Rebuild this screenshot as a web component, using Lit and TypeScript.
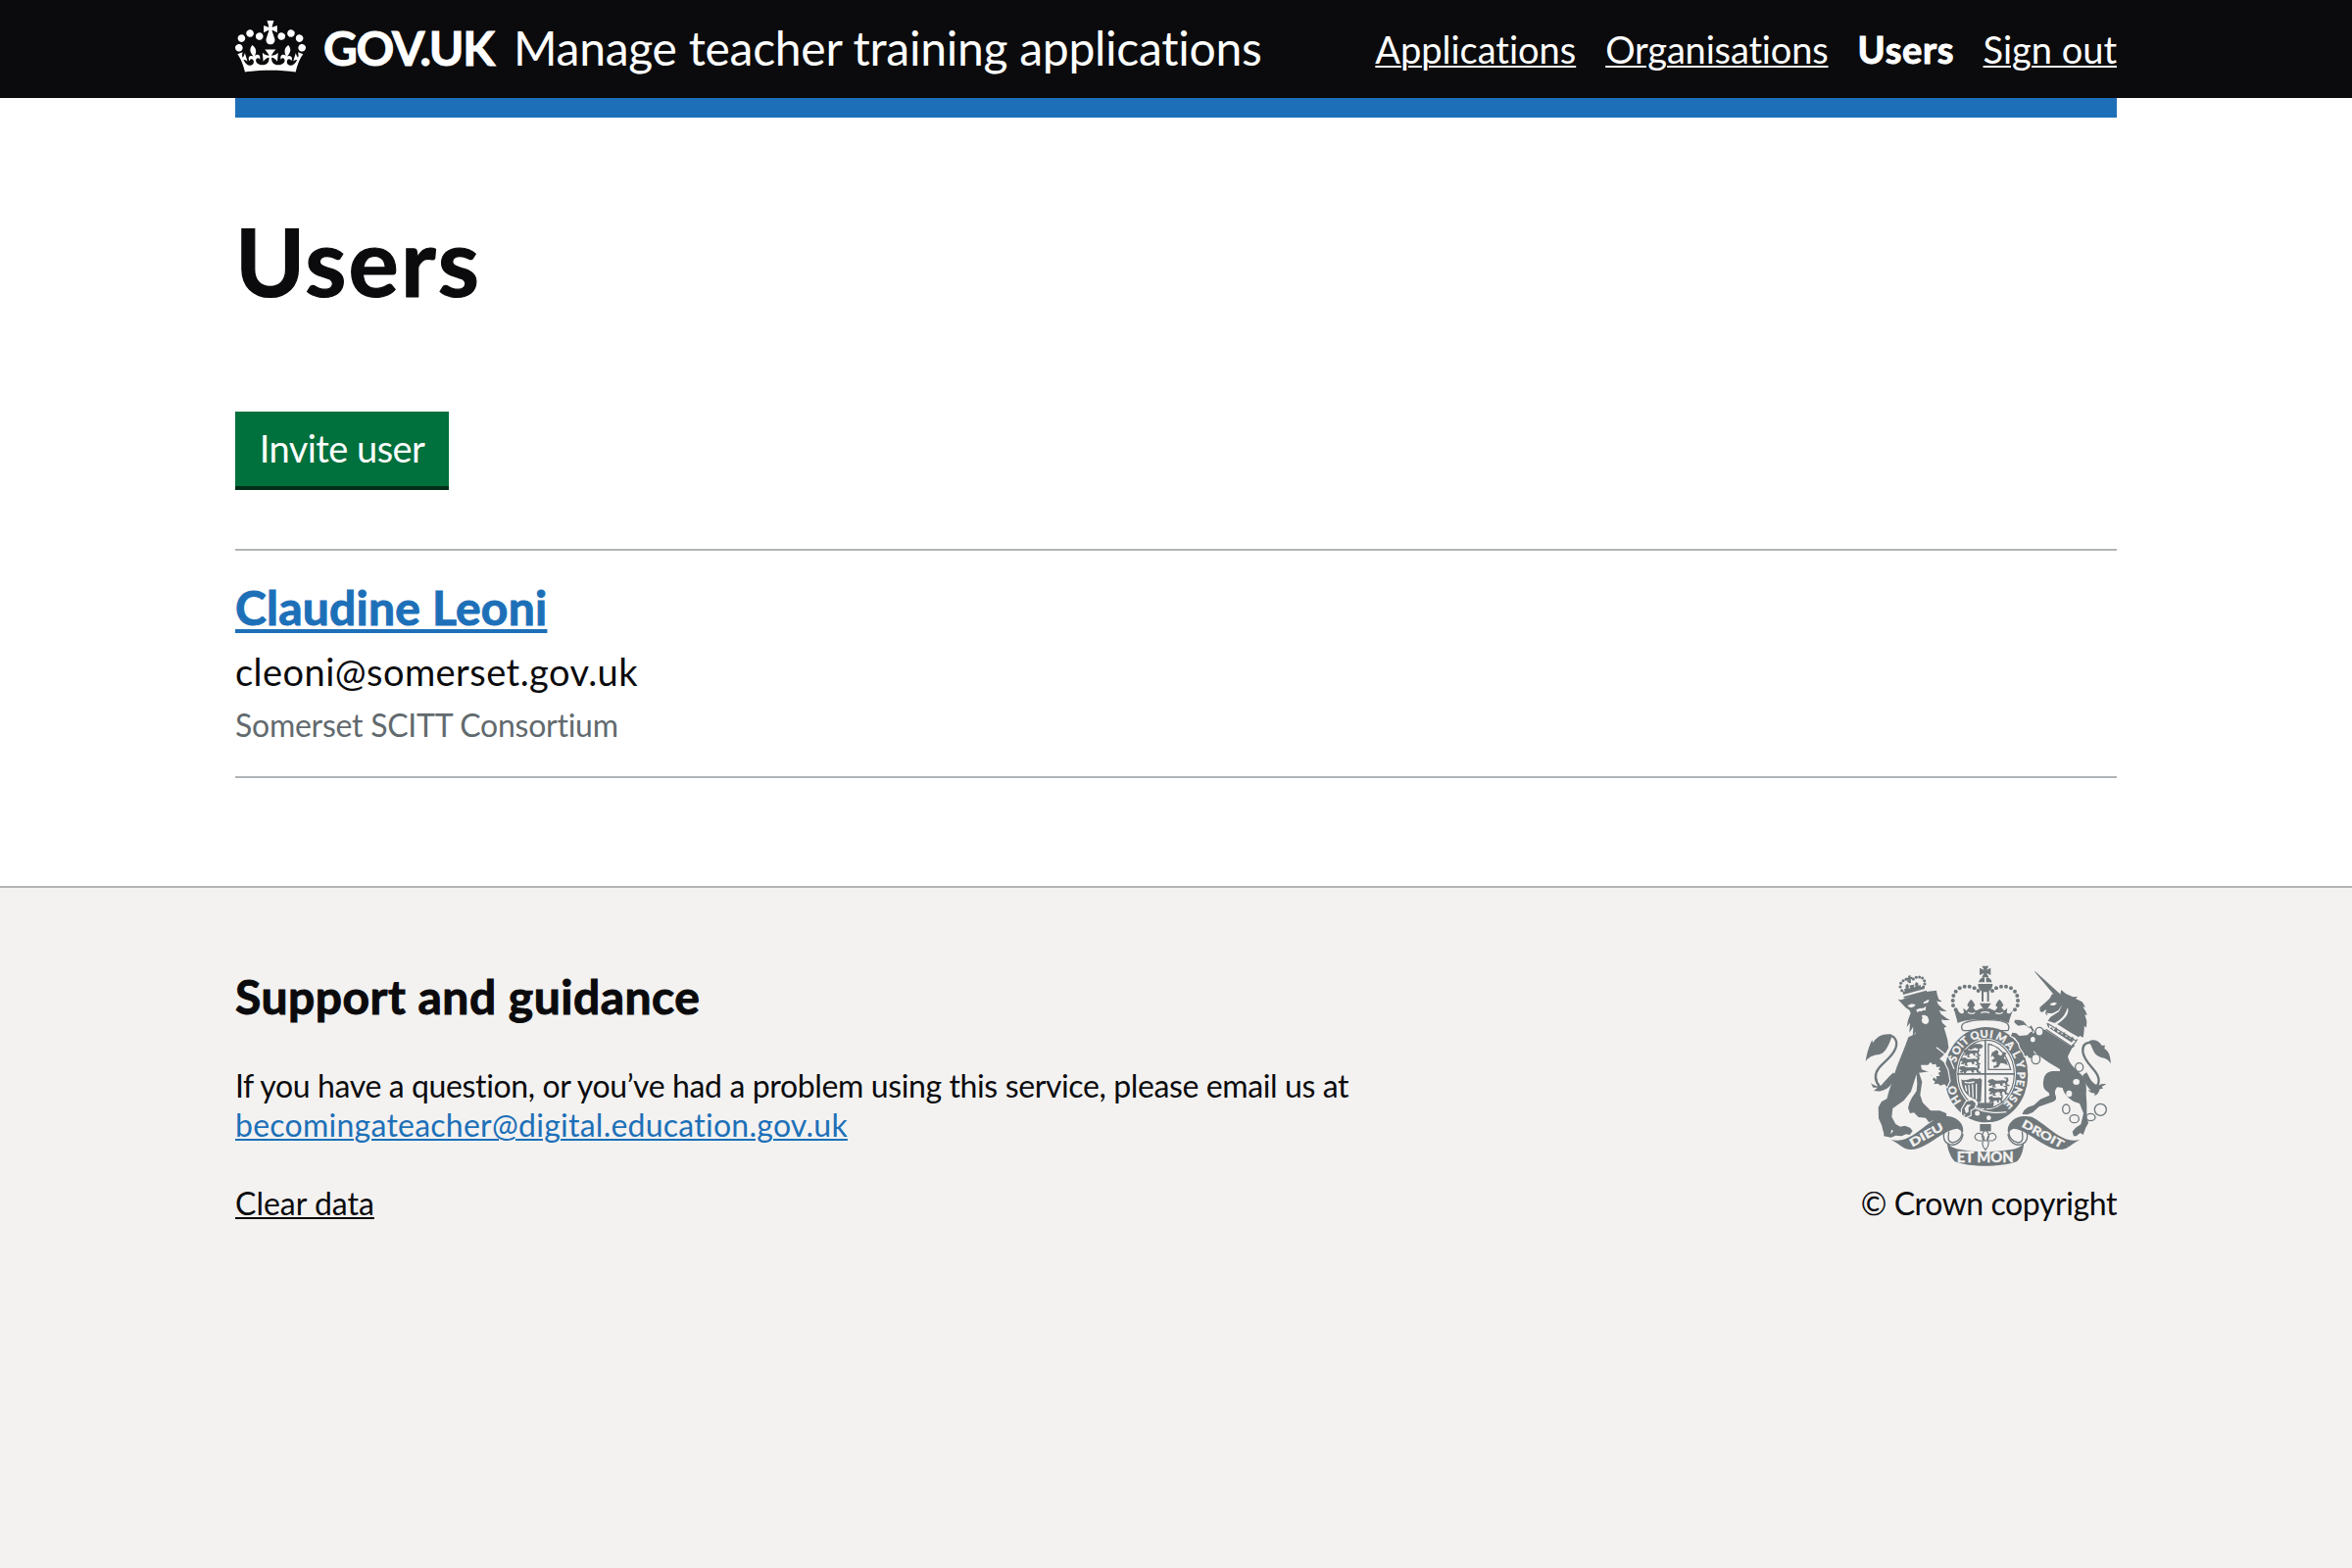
import { LitElement, html, svg, css } from "lit";
import { customElement, property } from "lit/decorators.js";

const CROWN_PATH =
  "M25 30.2c3.5 1.5 7.7-.2 9.1-3.7 1.5-3.6-.2-7.8-3.9-9.2-3.6-1.4-7.6.3-9.1 3.9-1.4 3.5.3 7.5 3.9 9zM9 39.5c3.6 1.5 7.8-.2 9.2-3.7 1.5-3.6-.2-7.8-3.9-9.1-3.6-1.5-7.6.2-9.1 3.8-1.4 3.5.3 7.5 3.8 9zM4.4 57.2c3.5 1.5 7.7-.2 9.1-3.8 1.5-3.6-.2-7.7-3.9-9.1-3.5-1.5-7.6.3-9.1 3.8-1.4 3.5.3 7.6 3.9 9.1zm38.3-21.4c3.5 1.5 7.7-.2 9.1-3.8 1.5-3.6-.2-7.7-3.9-9.1-3.6-1.5-7.6.3-9.1 3.8-1.3 3.6.4 7.7 3.9 9.1zm64.4-5.6c-3.6 1.5-7.8-.2-9.1-3.7-1.5-3.6.2-7.8 3.8-9.2 3.6-1.4 7.7.3 9.2 3.9 1.3 3.5-.4 7.5-3.9 9zm15.9 9.3c-3.6 1.5-7.7-.2-9.1-3.7-1.5-3.6.2-7.8 3.7-9.1 3.6-1.5 7.7.2 9.2 3.8 1.5 3.5-.3 7.5-3.8 9zm4.7 17.7c-3.6 1.5-7.8-.2-9.2-3.8-1.5-3.6.2-7.7 3.9-9.1 3.6-1.5 7.7.3 9.2 3.8 1.3 3.5-.4 7.6-3.9 9.1zM89.3 35.8c-3.6 1.5-7.8-.2-9.2-3.8-1.4-3.6.2-7.7 3.9-9.1 3.6-1.5 7.7.3 9.2 3.8 1.4 3.6-.3 7.7-3.9 9.1zM69.7 17.7l8.9 4.7V9.3l-8.9 2.8c-.2-.3-.5-.6-.9-.9L72.4 0H59.6l3.5 11.2c-.3.3-.6.5-.9.9l-8.8-2.8v13.1l8.8-4.7c.3.3.6.7.9.9l-5 15.4v.1c-.2.8-.4 1.6-.4 2.4 0 4.1 3.1 7.5 7 8.1h.2c.3 0 .7.1 1 .1.4 0 .7 0 1-.1h.2c4-.6 7.1-4.1 7.1-8.1 0-.8-.1-1.7-.4-2.4V34l-5.1-15.4c.4-.2.7-.6 1-.9zM66 92.8c16.9 0 32.8 1.1 47.1 3.2 4-16.9 8.9-26.7 14-33.5l-9.6-3.4c1 4.9 1.1 7.2 0 10.2-1.5-1.4-3-4.3-4.2-8.7L108.6 76c2.8-2 5-3.2 7.5-3.3-4.4 9.4-10 11.9-13.6 11.2-4.3-.8-6.3-4.6-5.6-7.9 1-4.7 5.7-5.9 8-.5 4.3-8.7-3-11.4-7.6-8.8 7.1-7.2 7.9-13.5 2.1-21.1-8 6.1-8.1 12.3-4.5 20.8-4.7-5.4-12.1-2.5-9.5 6.2 3.4-5.2 7.9-2 7.2 3.1-.6 4.3-6.4 7.8-13.5 7.2-10.3-.9-10.9-8-11.2-13.8 2.5-.5 7.1 1.8 11 7.3L80.2 60c-4.1 4.4-8 5.3-12.3 5.4 1.4-4.4 8-11.6 8-11.6H55.5s6.4 7.2 7.9 11.6c-4.2-.1-8-1-12.3-5.4l1.4 16.4c3.9-5.5 8.5-7.7 10.9-7.3-.3 5.8-.9 12.8-11.1 13.8-7.2.6-12.9-2.9-13.5-7.2-.7-5 3.8-8.3 7.1-3.1 2.7-8.7-4.6-11.6-9.4-6.2 3.7-8.5 3.6-14.7-4.6-20.8-5.8 7.6-5 13.9 2.2 21.1-4.7-2.6-11.9.1-7.7 8.8 2.3-5.5 7.1-4.2 8.1.5.7 3.3-1.3 7.1-5.7 7.9-3.5.7-9-1.8-13.5-11.2 2.5.1 4.7 1.3 7.5 3.3l-4.7-15.4c-1.2 4.4-2.7 7.2-4.3 8.7-1.1-3-.9-5.3 0-10.2l-9.5 3.4c5 6.9 9.9 16.7 14 33.5 14.8-2.1 30.8-3.2 47.7-3.2z";

/* Garter motto: each letter with the centre of its place on the band. */
const MOTTO: [string, number, number][] = [
  ["H", 347, 458], ["O", 337, 428],
  ["S", 338, 331], ["O", 349, 305], ["I", 361, 288], ["T", 374, 276],
  ["Q", 405, 259], ["U", 434, 254], ["I", 456, 255],
  ["M", 487, 266], ["A", 514, 289], ["L", 534, 317], ["Y", 545, 348],
  ["P", 547, 382], ["E", 545, 405], ["N", 537, 430], ["S", 523, 453], ["E", 508, 471],
];

const tilt = (x: number, y: number) =>
  (Math.atan2((x - 440) / 110 ** 2, -(y - 380) / 127 ** 2) * 180) / Math.PI;

const BEADS: [number, number][] = [
  [347, 181], [339, 168], [338, 153], [340, 138], [347, 125], [359, 115],
  [374, 110], [389, 110], [404, 115], [416, 123],
];
const LION_BEADS: [number, number][] = [
  [122, 92], [117, 81], [119, 70], [126, 62], [135, 58], [143, 63],
  [157, 57], [166, 52], [176, 51], [185, 54], [191, 62], [192, 72], [188, 81],
];

/* One passant lion of the English quarters, about 60 by 24 units. */
const passant = (x: number, y: number, w = 1) => svg`<path transform=${`translate(${x} ${y}) scale(${w} 1)`}
  d="M2 3l9-2 4 4 6 1 14-1 7 2 1-7-6-1 2-3 8 1 1 9-3 6 1 6 5 1-1 4-8-1-3-9-5 2 1 6-5 1-3-7-9 1-3 7 4 1-1 3-8-1 1-8-4 4-6-1 1-4 4-1-3-3-4-3z"/>`;

@customElement("crown-logo")
export class CrownLogo extends LitElement {
  static styles = css`
    :host { display: block; }
    .mark { display: block; width: 72px; height: 53px; fill: #fff; }
  `;
  render() {
    return html`<svg class="mark" viewBox="0 0 132 97" aria-hidden="true"><path d=${CROWN_PATH}></path></svg>`;
  }
}

@customElement("royal-arms")
export class RoyalArms extends LitElement {
  static styles = css`
    :host { display: block; }
    .arms { display: block; width: 250px; height: 205px; overflow: visible; fill: #6f777b; }
    .paper { fill: #f3f2f1; }
    .line { fill: none; stroke: #6f777b; stroke-width: 4; }
    .fine { stroke-width: 3.5; }
    .thick { stroke-width: 7; }
    .gap { fill: none; stroke: #f3f2f1; stroke-width: 4; }
    .edged { stroke: #f3f2f1; stroke-width: 7; paint-order: stroke; }
    .word { fill: #f3f2f1; font-family: Lato, "Liberation Sans", sans-serif; font-weight: 700; text-anchor: middle; stroke: #f3f2f1; stroke-width: 1.2; }
  `;

  private lion() {
    return svg`
      <path class="edged" d="M202 265c-12 34-24 62-35 90-9 25-16 51-25 77l-6 22-16 8-10 18 1 34 10 22 6 32 22 4 14-6 18 2 14-6 11 2 9-12-8-10-16-6-14 3-14-8-12-22 3-26 34-24 22-28 17-53 2 30-2 22-14 20-8 16-4 16 6 16 12-2 14 14 22 2 10 14 12-6 15 8 14-2 2-10 12-4-2-14-20-8-28 0-24-24-8-24 6-40-8-24-6-14-8-10-2-6 12-4 14 5 6 8 12 0 0 10 10 4-4 10 10 6-4 8 8 6-4 8 12-2 8 6 12-4 8 8 8-18-6-34-12-24-26-20 2-40-30-40z"/>
      <g transform="translate(60 30)">
        ${LION_BEADS.map(([x, y]) => svg`<circle cx=${x} cy=${y} r="4.6"></circle>`)}
        <path d="M141 47l9-1-2 5 6-1 1 8-6-1 1 12-6 1-2-12-5 2-1-7 6 0zM124 92l7 4-2-8 5-2-1-9 6-6 5 8-2 7 6-2-3-7 8-2 8-1-3 8 6-1-2-7 3-8 7 4 1 8 6-4 1 8 9-3 3 8-66 18zM127 111l70-19 2 5-70 19z"/>
        <path d="M110 119l10 2 33-13 43-12 32-4 2 12 5 15 10 6-8 2-8-3 4 10 13 13 14 9-17-1-7-3 6 12 18 14 10 5-18 0-9-2 3 10 13 12-8 3 5 16 6 22 3 24-8 14-36 36 0 20-100 13 22-34 20-50 12-34 0-12-11 19-1-21-8 17 2-33-12 18 2-30-10 13 4-22 8-21-4-9-12-8z"/>
        <path class="paper" d="M140 138l12-5 12 2-4 6-9 4-9-3zM188 128l13-7 5 0-4 8-13 4zM166 151l10-4 12-1 8-6-2 14-6-2-6 4-6-1-7 4zM183 168l8-1 9 4 5 11-2 9-8 5-9-4-4-8 3-7z"/>
      </g>
      <path class="gap" d="M288 296l40 32 14 34"/>
      <path class="paper" d="M240 350l22 0 8-9 6 8 10-2 2 9 12 0-6 8 8 6-9 5 6 8-12 2 2 10-14-10-12-14-20-7zM118 560l6-10 4 14zM150 548l-2 14 8-10z"/>
      <path class="line thick" d="M158 376c-22 18-31 36-42 43-16-18-20-39-4-60 18-22 38-30 50-58 8-20 2-38-18-42"/>
      <path d="M148 256c-26-2-44 8-55 27l-2-10c-5 12-14 28-20 66 10-14 26-20 42-21 16-4 26-20 38-54zM160 374c-10 16-19 20-28 34-14 12-32 8-45-2l7 13 14 0-12 10c12 2 24 2 34-4 14-6 22-18 30-36z"/>`;
  }

  private unicorn() {
    return svg`
      <g transform="translate(540 30)">
        <path d="M47 33l5 2 76 69-3 4-12 4z"/>
        <path d="M126 108l4-18 14 12 22 10 14-1-6 6 20 10 10 16-8-1 10 16 3 10-7-2 6 20-1 20-6-6-2 24-2 12-10-5-4 4-24-14-32-20-14-8-24-8 8-12 26-16 10-22-12 18-16 8-12 2-8 5-4-7 4-10-6 2-6 7-8-4-1-12 18-16 12-11 8-14z"/>
        <path class="paper" d="M96 133l12-5 9 3-8 7-12-1zM148 147l3 1c2 20-12 34-38 50l-8-4c20-10 36-22 43-47zM68 160l10-4-4 6zM84 161l12 1 0 4-8 0z"/>
        <path class="paper" d="M86 190l96 62-14 18-86-56z"/>
        <path class="edged" d="M82 213l78 51 8-7 4 4-10 9-12 24c6 26 20 34 42 56 14 16 16 34 14 58l2 30 0 40 5 20-8 14-8 22-9-6-12 10-8 0-4-14 10-12 16-10 8-34-12-30-18-6c-18-12-30-24-34-42l-16-2c-8 8-8 18-6 24 6 14 0 20-16 24l-34 12-20 18-16 6-16-1 6-12 12-10 18-6 20-18 28-12-2-8c-16-10-20-20-16-40 4-18 12-24 28-26l22 0 0-6-34-20-34-24-14-14 12 28-6 4-6-10-12 2-6-8-8 2-2-8-12-18-4-14-12-16-12-6 4-10 12 2 10 8 24-2 10-10 12-2-10-18-8 8-4-6-10-4-18 3-12-10 2-8 14 0 12 4 10 12 14 12 6 14 14-16z"/>
        <path class="line fine" d="M88 193l88 54M83 211l78 52 12-12 6-10"/>
        <path d="M92 196l2 12 8-3 4 9 10-10 3 17 9-3 4 9 9-8 3 15 9-3 3 9 10-7 2 10-6 8-72-46-6-14z"/>
        <path class="line thick" d="M198 354c8 20 18 28 30 40 18-10 22-28 10-48-14-22-38-38-42-66-2-20 8-30 26-28"/>
        <path d="M214 248c12-8 30-4 40 12l10 0-2 10c10 6 18 14 20 46-10-16-20-16-32-20-20-6-22-22-30-38zM196 350c4 22 14 38 26 48l-10-1c6 8 14 10 20 9l0 8c10-2 14-12 16-20l10-2-4-6 14-7c-12-2-16 0-26 4-20-8-24-22-34-40z"/>
        <ellipse class="paper" cx="154" cy="408" rx="9" ry="10"/>
        <ellipse class="paper" cx="176" cy="372" rx="10" ry="9"/>
        <g class="line">
          <ellipse class="paper" cx="185" cy="327" rx="12" ry="13"/>
          <ellipse cx="145" cy="455" rx="11" ry="14"/>
          <ellipse cx="170" cy="485" rx="14" ry="12"/>
          <ellipse cx="220" cy="480" rx="14" ry="11"/>
          <circle cx="250" cy="457" r="18"/>
          <ellipse class="paper" cx="63" cy="218" rx="12" ry="13"/>
          <ellipse class="paper" cx="52" cy="302" rx="13" ry="15"/>
        </g>
        <ellipse class="paper" cx="43" cy="242" rx="7" ry="8"/>
      </g>`;
  }

  private crown() {
    return svg`
      ${BEADS.map(([x, y]) => svg`<circle cx=${x} cy=${y} r="6"></circle><circle cx=${875 - x} cy=${y} r="6"></circle>`)}
      <path d="M427 47h21l-7 12 13-6v22l-13-6 7 12h-21l7-12-14 6v-22l14 6zM417 97c2-9 8-15 18-16v16zM440 81c10 1 16 7 18 16h-18zM415 102h45c0 12-6 18-11 22v32h-6v-29h-11v29h-6v-32c-5-4-11-10-11-22z"/>
      <path d="M352 180c6 12 14 16 20 10l-2-14 10 8 8-10-6-6c2-8 6-13 12-19 6 6 10 11 12 19l-6 6 8 10 10-4c8-4 10-4 14 0l-12-19h35l-12 19c4-4 6-4 14 0l10 4 8-10-6-6c2-8 6-13 12-19 6 6 10 11 12 19l-6 6 8 10 10-8-2 14c6 6 14 2 20-10-5 14-10 24-14 42-32-16-124-16-156 0-4-18-8-28-11-42z"/>
      <path class="gap" d="M384 189c7 5 17 5 22 1M469 190c6 4 16 4 22-1M424 191c8-4 18-4 26 0"/>
      <path class="line" d="M372 222c30-14 100-14 131 0 8 6 8 16 4 22-16 4-36-4-70-4s-54 8-68 4c-6-6-6-16 3-22z"/>`;
  }

  private garter() {
    return svg`
      <ellipse class="paper" cx="440" cy="380" rx="134" ry="151"/>
      <ellipse cx="440" cy="380" rx="128" ry="146"/>
      <ellipse class="paper" cx="440" cy="378" rx="91" ry="109"/>
      <ellipse class="line fine" cx="440" cy="378" rx="86" ry="104"/>
      <path d="M435 272h5v220h-5zM351 375h177v5H351z"/>
      <path d="M414 466h48v14h-48z"/>
      ${passant(372, 300)}${passant(362, 326, 1.2)}${passant(358, 352, 1.3)}
      ${passant(446, 392, 1.3)}${passant(448, 418, 1.2)}${passant(448, 444, 0.9)}
      <path d="M383 300l8-10 14-4 18 0 8 6-6 8-20-2-12 6z"/>
      <path class="line" d="M447 286c32 6 56 32 68 78h-68z"/>
      <path d="M458 312l14-8 6 6-2 8 10 4 8-12 8 4-8 16 8 4 4 18-10-6-12-2-6 12-14 4-2-6 10-4 0-10-10 2-6-6 10-6-6-8-6 4z"/>
      <path d="M364 394c8 6 20 0 30-2 10-2 18 4 28-2l5 6-3 66-8 4-8-10c-24-8-42-24-44-62z"/>
      <path class="gap" d="M374 402c6 6 20 2 30 0M376 412l4 18M387 411l2 32M398 409l2 40M410 407l0 48"/>
      <path d="M378 462c30 22 70 34 110 34l14 2-20 20c-36 14-76 8-108-20z"/>
      <path class="gap" d="M390 470c28 24 74 30 112 24"/>
      <path class="edged" d="M366 486l14-24 18-4 10 10-4 14-12 6 0 16-14 6-12-8z"/>
      <path class="paper" d="M374 484l8-12 12 0-8 8 0 14-8 4zM369 500l8 2-2 4z"/>
      <circle class="paper" cx="413" cy="498" r="7.500"/>
      <circle class="paper" cx="448" cy="512" r="7"/>
      ${MOTTO.map(([ch, x, y]) => svg`<text class="word" font-size="33" y="12" transform=${`translate(${x} ${y}) rotate(${tilt(x, y).toFixed(1)})`}>${ch}</text>`)}`;
  }

  private ribbons() {
    const scroll = svg`
      <path d="M148 579c20 5 36 2 52-6 34-16 58-44 96-64 26-6 52 0 62 14 10 10 14 22 11 36-4-6-10-12-18-14-32 4-64 32-96 50-24 14-46 18-64 10-16-8-28-20-43-26z"/>
      <path class="line" d="M366 552c2 20-12 34-28 36-18-2-14-18-12-34"/>
      <path class="line" d="M356 530c-26-2-46 18-46 38 0 16 8 24 24 27 18 0 34-14 35-34"/>`;
    return svg`
      ${scroll}
      <g transform="translate(876 0) scale(-1 1)">${scroll}</g>
      <path d="M320 584c6 14 18 20 36 24 54 10 110 10 166 0 18-4 30-10 34-24-2 26-6 44-22 62-50 18-142 18-190 0-14-16-22-36-24-62z"/>
      <path d="M421 531h34v22h-34z"/>
      <path class="line fine" d="M438 548c-14 14-14 24-4 34M438 548c14 14 14 24 4 34M434 582c2-16-10-26-22-22-10 6-8 18 2 20M442 582c2-16 10-26 22-22 10 6 8 18-2 20M414 582h48M430 584c-4 10 0 18 8 26 8-8 12-16 8-26"/>
      <text class="word" font-size="34" textLength="112" lengthAdjust="spacingAndGlyphs" transform="translate(263 574) rotate(-29)">DIEU</text>
      <text class="word" font-size="34" textLength="140" lengthAdjust="spacingAndGlyphs" transform="translate(608 572) rotate(29)">DROIT</text>
      <text class="word" font-size="44" textLength="174" lengthAdjust="spacingAndGlyphs" transform="translate(437 649)">ET MON</text>`;
  }

  render() {
    return html`<svg class="arms" viewBox="72 45 750 615" aria-hidden="true">
      ${this.garter()}${this.lion()}${this.unicorn()}${this.ribbons()}${this.crown()}
    </svg>`;
  }
}

@customElement("site-header")
export class SiteHeader extends LitElement {
  static styles = css`
    :host { display: block; background: #0b0b0d; color: #fff; }
    .bar { width: 1920px; height: 100px; margin: 0 auto; display: flex; align-items: flex-start; }
    .crown { padding-top: 21px; }
    .logotype { margin: 19px 0 0 18px; width: 178px; font-size: 48px; line-height: 60px; font-weight: 700; letter-spacing: -1.3px; white-space: nowrap; -webkit-text-stroke: 1px #fff; }
    .service { margin: 19px 0 0 16px; font-size: 48px; line-height: 60px; letter-spacing: -0.27px; white-space: nowrap; }
    .nav { margin-left: auto; padding-top: 30px; display: flex; gap: 30px; font-size: 38px; line-height: 40px; }
    .link { color: #fff; text-decoration: underline; text-decoration-thickness: 2px; text-underline-offset: 2px; letter-spacing: -0.02px; }
    .organisations { letter-spacing: -0.16px; }
    .current { text-decoration: none; font-weight: 700; letter-spacing: 0.7px; width: 98px; -webkit-text-stroke: 1px #fff; }
    .stripe { width: 1920px; height: 20px; margin: 0 auto; background: #1d70b8; }
    .under { background: #fff; }
  `;
  render() {
    return html`
      <div class="bar">
        <crown-logo class="crown"></crown-logo>
        <div class="logotype">GOV.UK</div>
        <div class="service">Manage teacher training applications</div>
        <nav class="nav">
          <a class="link">Applications</a>
          <a class="link organisations">Organisations</a>
          <a class="link current">Users</a>
          <a class="link">Sign out</a>
        </nav>
      </div>
      <div class="under"><div class="stripe"></div></div>`;
  }
}

@customElement("user-card")
export class UserCard extends LitElement {
  @property() name = "";
  @property() email = "";
  @property() organisation = "";
  static styles = css`
    :host { display: block; box-sizing: border-box; height: 232px; padding-top: 28px; border-bottom: 2px solid #b1b4b6; }
    .name { margin: 0; font-size: 48px; line-height: 60px; font-weight: 700; letter-spacing: 0.24px; color: #1d70b8; -webkit-text-stroke: 1px #1d70b8; }
    .link { text-decoration: underline; text-decoration-thickness: 4px; text-underline-offset: 4px; }
    .email { margin-top: 10px; font-size: 38px; line-height: 50px; letter-spacing: 0.45px; color: #0b0b0d; }
    .organisation { margin-top: 10px; font-size: 32px; line-height: 40px; letter-spacing: -0.26px; color: #626a6e; }
  `;
  render() {
    return html`
      <h2 class="name"><a class="link">${this.name}</a></h2>
      <div class="email">${this.email}</div>
      <div class="organisation">${this.organisation}</div>`;
  }
}

@customElement("site-footer")
export class SiteFooter extends LitElement {
  static styles = css`
    :host { display: block; background: #f3f2f1; border-top: 2px solid #b1b4b6; color: #0b0b0d; }
    .row { width: 1920px; margin: 0 auto; padding-top: 79px; display: flex; justify-content: space-between; font-size: 32px; line-height: 40px; }
    .title { margin: 2px 0 41px; font-size: 48px; line-height: 60px; font-weight: 700; letter-spacing: 0.5px; -webkit-text-stroke: 1px #0b0b0d; }
    .text { margin: 0; letter-spacing: -0.38px; }
    .mail { color: #1d70b8; letter-spacing: 0.25px; }
    .mail, .clear { text-decoration: underline; text-decoration-thickness: 2px; text-underline-offset: 2px; }
    .clear { display: inline-block; margin-top: 40px; letter-spacing: 0; }
    .rights { display: flex; flex-direction: column; align-items: flex-end; }
    .arms { margin-right: 6px; }
    .copyright { margin-top: 18px; letter-spacing: -0.42px; }
  `;
  render() {
    return html`
      <div class="row">
        <div>
          <h2 class="title">Support and guidance</h2>
          <p class="text">If you have a question, or you’ve had a problem using this service, please email us at<br /><a class="mail">becomingateacher@digital.education.gov.uk</a></p>
          <a class="clear">Clear data</a>
        </div>
        <div class="rights">
          <royal-arms class="arms"></royal-arms>
          <div class="copyright">© Crown copyright</div>
        </div>
      </div>`;
  }
}

@customElement("app-root")
export class AppRoot extends LitElement {
  static styles = css`
    :host { display: flex; flex-direction: column; min-height: 1600px; background: #fff; color: #0b0b0d; font-family: Lato, "Liberation Sans", sans-serif; font-variant-ligatures: none; }
    .main { width: 1920px; height: 784px; margin: 0 auto; }
    .title { margin: 0; padding-top: 96px; font-size: 96px; line-height: 100px; font-weight: 700; letter-spacing: 2.1px; -webkit-text-stroke: 1.2px #0b0b0d; }
    .button { display: block; box-sizing: border-box; width: 218px; height: 80px; margin: 104px 0 60px; padding: 0 0 2px; border: 0; border-bottom: 4px solid #002d18; background: #00703c; color: #fff; font: inherit; font-size: 38px; line-height: 72px; letter-spacing: -0.55px; text-align: center; }
    .list { border-top: 2px solid #b1b4b6; }
    .footer { flex: 1; }
  `;
  render() {
    return html`
      <site-header></site-header>
      <main class="main">
        <h1 class="title">Users</h1>
        <button class="button">Invite user</button>
        <section class="list">
          <user-card name="Claudine Leoni" email="cleoni@somerset.gov.uk" organisation="Somerset SCITT Consortium"></user-card>
        </section>
      </main>
      <site-footer class="footer"></site-footer>`;
  }
}
